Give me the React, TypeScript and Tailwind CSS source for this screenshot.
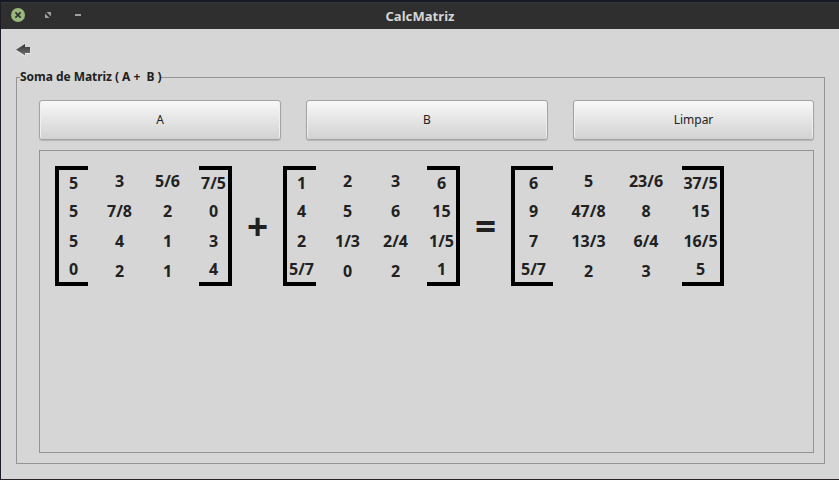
import React from 'react';

type Column = string[];

function SideColumn({ values, side, wide }: { values: Column; side: 'left' | 'right'; wide?: boolean }) {
  return (
    <div
      className={`grid h-[120px] grid-rows-[26px_30px_30px_26px] border-y-4 border-black ${side === 'left' ? 'border-l-4' : 'border-r-4'} ${wide ? 'w-[42px] pr-px' : 'w-[33px]'}`}
    >
      {values.map((v, i) => (
        <span key={i} className="flex items-center justify-center whitespace-nowrap">{v}</span>
      ))}
    </div>
  );
}

function InnerColumn({ values, width }: { values: Column; width: string }) {
  return (
    <div className={`grid h-[120px] grid-rows-4 ${width}`}>
      {values.map((v, i) => (
        <span key={i} className="flex items-center justify-center whitespace-nowrap">{v}</span>
      ))}
    </div>
  );
}

function Matrix({ columns, wide }: { columns: Column[]; wide?: boolean }) {
  return (
    <div className="flex shrink-0 text-[16px] leading-[22px] font-bold">
      <SideColumn values={columns[0]} side="left" wide={wide} />
      <InnerColumn values={columns[1]} width={wide ? 'w-[71px]' : 'w-[63px]'} />
      <InnerColumn values={columns[2]} width={wide ? 'w-[44px] mr-[14px]' : 'w-[33px] mr-[15px]'} />
      <SideColumn values={columns[3]} side="right" wide={wide} />
    </div>
  );
}

function Operator({ symbol }: { symbol: string }) {
  return (
    <div className="flex h-[118px] w-[51px] shrink-0 items-center justify-center text-[37px] leading-none font-bold">
      {symbol}
    </div>
  );
}

function ActionButton({ label, width }: { label: string; width: string }) {
  return (
    <button
      className={`h-[40px] rounded-[3px] border border-[#a3a3a3] bg-linear-to-b from-[#f8f8f8] to-[#d2d2d2] text-[12px] leading-4 shadow-[0_1px_1px_#b5b5b5,inset_1px_0_0_#f0f0f0,inset_-1px_0_0_#f0f0f0] ${width}`}
    >
      {label}
    </button>
  );
}

export default function App() {
  return (
    <div className="flex h-[480px] w-[839px] flex-col overflow-hidden border-t-2 border-b border-l border-t-[#171925] border-b-[#292325] border-l-[#1b1c26] bg-[#d6d6d6] font-['Noto_Sans',sans-serif] text-[#212121]">
      <header className="grid h-[27px] shrink-0 grid-cols-[1fr_auto_1fr] items-center border-t border-[#393939] bg-[#2f2f2f]">
        <div className="flex items-center pb-[2px] pl-[10px]">
          <svg width="14" height="14" viewBox="0 0 14 14">
            <circle cx="7" cy="7" r="7" fill="#9ab87c" />
            <path d="M4.4 4.4 9.6 9.6M9.6 4.4 4.4 9.6" stroke="#2f2f2f" strokeWidth="1.6" />
          </svg>
          <svg className="ml-5" width="6" height="6" viewBox="0 0 6 6" fill="#a0a0a0">
            <path d="M1.5 0H6V4.5ZM0 1.5V6H4.5Z" />
          </svg>
          <span className="ml-6 h-[2px] w-[6px] bg-[#a0a0a0]" />
        </div>
        <h1 className="text-[13px] leading-4 font-bold tracking-[0.06px] text-[#d6d6d6]">CalcMatriz</h1>
        <span />
      </header>
      <main className="flex flex-1 flex-col pl-[15px] pr-[14px]">
        <svg className="mt-[14px] shrink-0" width="16" height="14" viewBox="0 0 16 14">
          <defs>
            <linearGradient id="arrow" x1="0" y1="0" x2="0" y2="1">
              <stop offset="0" stopColor="#303030" />
              <stop offset="1" stopColor="#777" />
            </linearGradient>
          </defs>
          <path d="M0 7.5 8 1.5V5H14.5V11H9V14Z" fill="#ececec" />
          <path d="M0 6.7 9 1V4H14V10H9V12.5Z" fill="url(#arrow)" />
        </svg>
        <fieldset className="mt-[12px] h-[395px] shrink-0 border border-[#949494] px-[22px] pr-[10px]">
          <legend className="-ml-[19px] h-[16px] text-[12px] leading-4 font-bold tracking-[-0.045px] whitespace-pre">Soma de Matriz ( A +  B )</legend>
          <div className="mt-[15px] flex gap-[25px]">
            <ActionButton label="A" width="w-[242px]" />
            <ActionButton label="B" width="w-[242px]" />
            <ActionButton label="Limpar" width="w-[241px]" />
          </div>
          <section className="mt-[10px] flex h-[303px] w-[775px] border border-[#949494] pt-[15px] pl-[15px]">
            <Matrix columns={[['5', '5', '5', '0'], ['3', '7/8', '4', '2'], ['5/6', '2', '1', '1'], ['7/5', '0', '3', '4']]} />
            <Operator symbol="+" />
            <Matrix columns={[['1', '4', '2', '5/7'], ['2', '5', '1/3', '0'], ['3', '6', '2/4', '2'], ['6', '15', '1/5', '1']]} />
            <Operator symbol="=" />
            <Matrix wide columns={[['6', '9', '7', '5/7'], ['5', '47/8', '13/3', '2'], ['23/6', '8', '6/4', '3'], ['37/5', '15', '16/5', '5']]} />
          </section>
        </fieldset>
      </main>
    </div>
  );
}
